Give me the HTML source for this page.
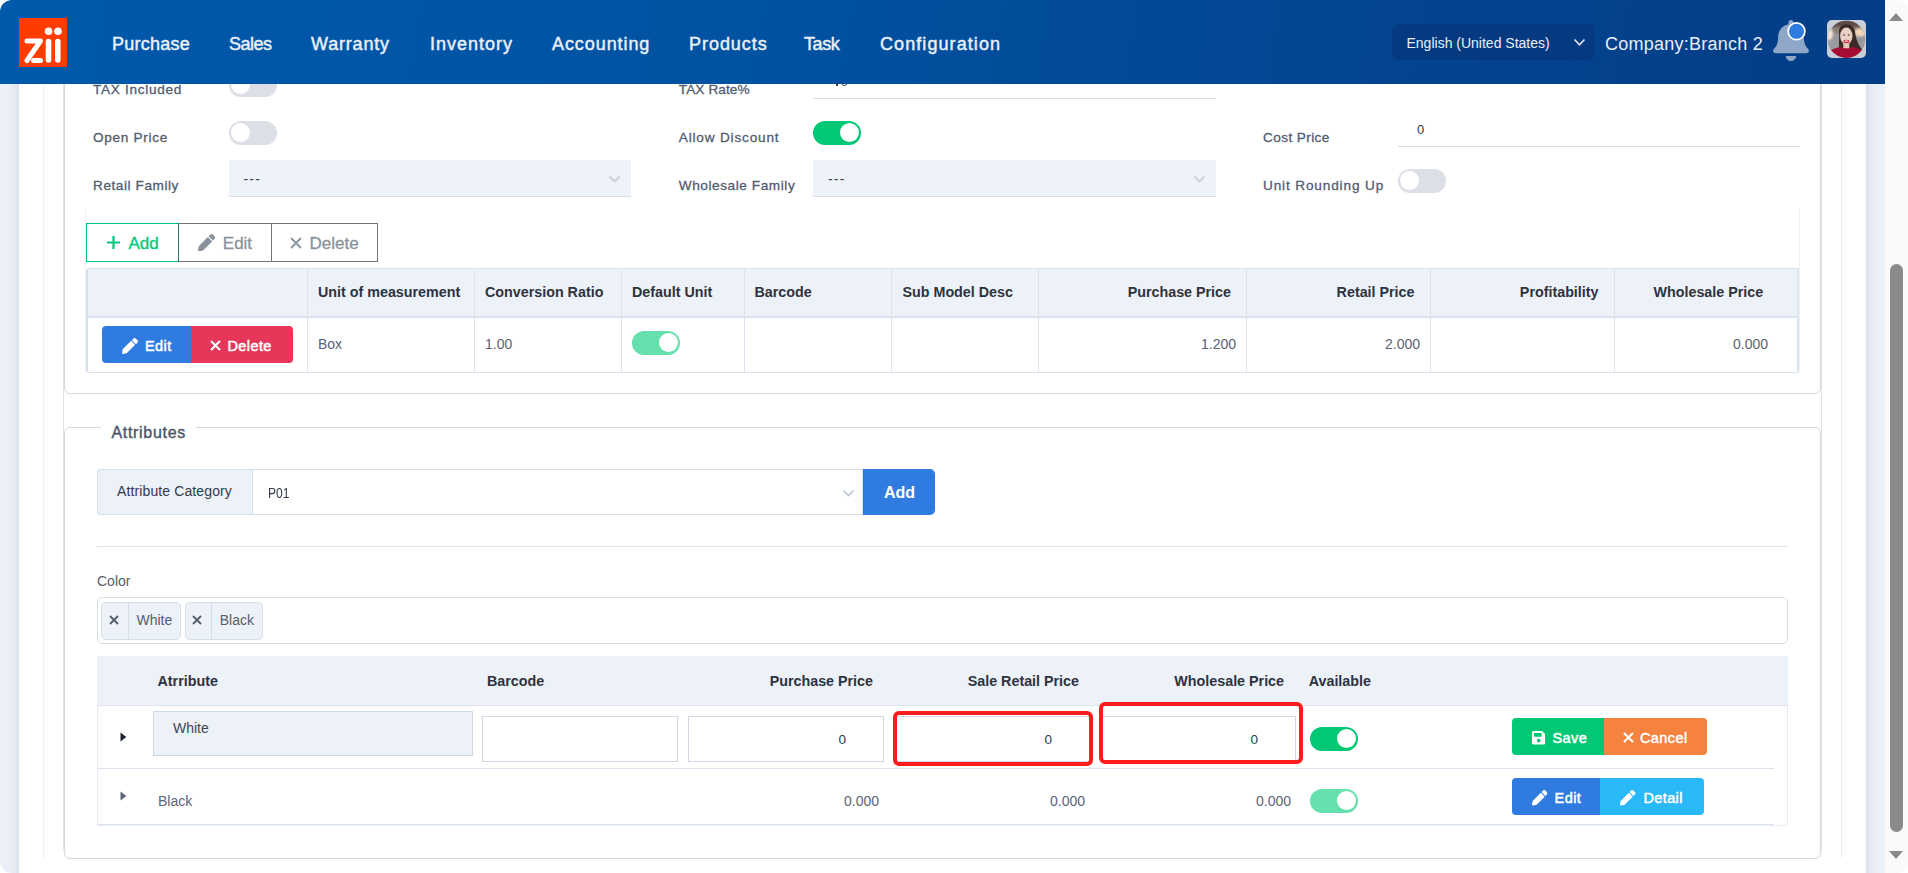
<!DOCTYPE html>
<html><head><meta charset="utf-8">
<style>
*{box-sizing:border-box;margin:0;padding:0}
html,body{width:1908px;height:873px;overflow:hidden;background:#fff;font-family:"Liberation Sans",sans-serif}
.a{position:absolute}
.t{position:absolute;line-height:1;white-space:nowrap}
#hdr{left:0;top:0;width:1885px;height:84px;background:linear-gradient(100deg,#0059ab 0%,#0052a2 40%,#03448f 75%,#033d86 100%);border-top-left-radius:12px}
.nav{color:#eaf0f8;font-size:18px;font-weight:normal;-webkit-text-stroke:0.45px #eaf0f8;letter-spacing:0.25px;top:34.8px}
.lbl{color:#505d72;font-size:13.6px;-webkit-text-stroke:0.3px #505d72;letter-spacing:0.7px}
.tog{position:absolute;width:48px;height:24px;border-radius:12px;background:#dcdfe6}
.tog::after{content:"";position:absolute;top:1.7px;left:1.6px;width:19.6px;height:19.6px;border-radius:50%;background:#fff}
.tog.on{background:#00c875}
.tog.on::after{left:27px;top:2px;width:19px;height:19px}
.tog.lt{background:#66e0ac}
.tog.lt::after{left:27px;top:2px;width:19px;height:19px}
.sel{position:absolute;background:#eef2f9;border-bottom:1px solid #d5dcea}
.chev{position:absolute;width:8px;height:8px;border-right:1.8px solid #c6cbd4;border-bottom:1.8px solid #c6cbd4;transform:rotate(45deg)}
.th{position:absolute;font-size:14.3px;font-weight:bold;color:#2d3340;line-height:1;white-space:nowrap}
.td{position:absolute;font-size:14px;color:#5a6270;line-height:1;white-space:nowrap}
.vl{position:absolute;width:1px;background:#dce3ee}
.hl{position:absolute;height:1px;background:#dce3ee}
.btn{position:absolute;color:#fff;font-size:14.5px;-webkit-text-stroke:0.5px #fff;letter-spacing:0.4px;line-height:1;white-space:nowrap}
</style></head><body>

<!-- page frame -->
<div class="a" style="left:0;top:84px;width:19px;height:789px;background:linear-gradient(90deg,#ecf1f9 0%,#e9eef7 50%,#e4e9f2 78%,#dce1eb 100%);border-bottom-left-radius:12px"></div>
<div class="a" style="left:43px;top:84px;width:1px;height:774px;background:#e9eef8"></div>
<div class="a" style="left:1841px;top:84px;width:1px;height:774px;background:#e9eef8"></div>
<div class="a" style="left:1866px;top:84px;width:19px;height:789px;background:linear-gradient(90deg,#dce1eb 0%,#e4e9f2 22%,#e9eef7 50%,#ecf1f9 100%)"></div>
<!-- scrollbar -->
<div class="a" style="left:1885px;top:0;width:23px;height:873px;background:#fafafa;border-top-right-radius:12px;border-bottom-right-radius:12px"></div>
<div class="a" style="left:1888.8px;top:12.8px;width:0;height:0;border-left:7.7px solid transparent;border-right:7.7px solid transparent;border-bottom:8.3px solid #8a8a8a"></div>
<div class="a" style="left:1888.8px;top:851px;width:0;height:0;border-left:7.7px solid transparent;border-right:7.7px solid transparent;border-top:8.2px solid #8a8a8a"></div>
<div class="a" style="left:1890px;top:264px;width:13px;height:568px;border-radius:6.5px;background:#8a8a8a"></div>

<!-- CARD 1 -->
<div class="a" style="left:63px;top:84px;width:1px;height:767px;background:#e0e3eb"></div>
<div class="a" style="left:1821px;top:84px;width:1px;height:767px;background:#e0e3eb"></div>
<div class="a" style="left:64px;top:30px;width:1757px;height:364px;border:1px solid #d6d8dd;border-radius:6px"></div>
<div class="t lbl" style="left:93px;top:82.6px">TAX Included</div>
<div class="t lbl" style="left:93px;top:130.6px">Open Price</div>
<div class="t lbl" style="left:93px;top:178.6px;letter-spacing:0.57px">Retail Family</div>
<div class="t lbl" style="left:678.8px;top:82.6px;letter-spacing:0.1px">TAX Rate%</div>
<div class="t lbl" style="left:678.8px;top:130.6px;letter-spacing:0.82px">Allow Discount</div>
<div class="t lbl" style="left:678.8px;top:178.6px;letter-spacing:0.58px">Wholesale Family</div>
<div class="t lbl" style="left:1263px;top:130.6px;letter-spacing:0.41px">Cost Price</div>
<div class="t lbl" style="left:1263px;top:178.6px;letter-spacing:0.86px">Unit Rounding Up</div>
<div class="tog" style="left:229px;top:72.5px"></div>
<div class="tog" style="left:229px;top:121px"></div>
<div class="tog on" style="left:813px;top:121px"></div>
<div class="tog" style="left:1398px;top:169px"></div>
<div class="sel" style="left:229px;top:160px;width:402px;height:37px"></div>
<div class="t" style="left:243.5px;top:172px;font-size:14px;letter-spacing:1.2px;color:#3d4454">---</div>
<svg class="a" style="left:607.8px;top:175.3px" width="13" height="9" viewBox="0 0 13 9"><path d="M1.5 1.5 L6.5 6.5 L11.5 1.5" stroke="#cdd1d9" stroke-width="2.1" fill="none"/></svg>
<div class="sel" style="left:813px;top:160px;width:403px;height:37px"></div>
<div class="t" style="left:828px;top:172px;font-size:14px;letter-spacing:1.2px;color:#3d4454">---</div>
<svg class="a" style="left:1192.6px;top:175.3px" width="13" height="9" viewBox="0 0 13 9"><path d="M1.5 1.5 L6.5 6.5 L11.5 1.5" stroke="#cdd1d9" stroke-width="2.1" fill="none"/></svg>
<div class="a" style="left:813px;top:97.5px;width:403px;height:1px;background:#d5dcea"></div>
<div class="a" style="left:836px;top:76px;width:1.7px;height:10px;background:#333a48"></div><div class="t" style="left:840.8px;top:75px;font-size:13px;color:#333a48">0</div>
<div class="a" style="left:1398px;top:145.5px;width:402px;height:1px;background:#d5dcea"></div>
<div class="t" style="left:1417px;top:122.7px;font-size:13px;color:#333a48">0</div>

<!-- units container -->
<div class="a" style="left:85px;top:208px;width:1px;height:165px;background:#eef2f8"></div>
<div class="a" style="left:1799px;top:208px;width:1px;height:165px;background:#eef2f8"></div>
<!-- toolbar -->
<div class="a" style="left:86px;top:223px;width:93px;height:39px;border:1px solid #00c878;z-index:1"></div>
<div class="a" style="left:178px;top:223px;width:94px;height:39px;border:1px solid #6f767e"></div>
<div class="a" style="left:271px;top:223px;width:107px;height:39px;border:1px solid #6f767e"></div>
<div class="a" style="left:178px;top:223px;width:1px;height:39px;background:#2e7a5c;z-index:2"></div>
<svg class="a" style="left:106px;top:235px" width="15" height="15" viewBox="0 0 15 15"><path d="M7.5 1 V14 M1 7.5 H14" stroke="#00c878" stroke-width="2.2"/></svg>
<div class="t" style="left:128.5px;top:234.9px;font-size:17px;-webkit-text-stroke:0.3px #00c878;color:#00c878">Add</div>
<svg class="a" style="left:198px;top:233.8px" width="17.3" height="17.3" viewBox="0 0 512 512"><path fill="#8a929c" d="M497.9 142.1l-46.1 46.1c-4.7 4.7-12.3 4.7-17 0l-111-111c-4.7-4.7-4.7-12.3 0-17l46.1-46.1c18.7-18.7 49.1-18.7 67.9 0l60.1 60.1c18.8 18.7 18.8 49.1 0 67.9zM284.2 99.8L21.6 362.4.4 483.9c-2.9 16.4 11.4 30.6 27.8 27.8l121.5-21.3 262.6-262.6c4.7-4.7 4.7-12.3 0-17l-111-111c-4.8-4.7-12.4-4.7-17.1 0z"/></svg>
<div class="t" style="left:222.8px;top:234.9px;font-size:17px;-webkit-text-stroke:0.3px #8a929c;color:#8a929c">Edit</div>
<svg class="a" style="left:290px;top:237px" width="12" height="12" viewBox="0 0 12 12"><path d="M1 1 L11 11 M11 1 L1 11" stroke="#8a929c" stroke-width="1.8"/></svg>
<div class="t" style="left:309.5px;top:234.9px;font-size:17px;-webkit-text-stroke:0.3px #8a929c;color:#8a929c">Delete</div>

<!-- units table -->
<div class="a" style="left:86px;top:268px;width:1713px;height:105px;border:1px solid #d9e1ed;border-left:2px solid #d6e0ec;border-right:2px solid #dde5ef;border-radius:4px 0 3px 4px;overflow:hidden">
 <div class="a" style="left:0;top:0;width:1711px;height:49px;background:#edf1f8;border-bottom:2px solid #dae2ee"></div>
</div>
<div class="vl" style="left:307px;top:269px;height:103px"></div>
<div class="vl" style="left:474px;top:269px;height:103px"></div>
<div class="vl" style="left:621px;top:269px;height:103px"></div>
<div class="vl" style="left:744px;top:269px;height:103px"></div>
<div class="vl" style="left:891px;top:269px;height:103px"></div>
<div class="vl" style="left:1038px;top:269px;height:103px"></div>
<div class="vl" style="left:1246px;top:269px;height:103px"></div>
<div class="vl" style="left:1430px;top:269px;height:103px"></div>
<div class="vl" style="left:1614px;top:269px;height:103px"></div>
<div class="th" style="left:318px;top:285px">Unit of measurement</div>
<div class="th" style="left:485px;top:285px">Conversion Ratio</div>
<div class="th" style="left:632px;top:285px">Default Unit</div>
<div class="th" style="left:754.5px;top:285px">Barcode</div>
<div class="th" style="left:902.5px;top:285px">Sub Model Desc</div>
<div class="th" style="right:677px;top:285px">Purchase Price</div>
<div class="th" style="right:493.5px;top:285px">Retail Price</div>
<div class="th" style="right:309.5px;top:285px">Profitability</div>
<div class="th" style="left:1653.5px;top:285px">Wholesale Price</div>
<div class="a" style="left:102px;top:326px;width:191px;height:37px;border-radius:4px;overflow:hidden">
 <div class="a" style="left:0;top:0;width:89px;height:37px;background:#2f7be0"></div>
 <div class="a" style="left:89px;top:0;width:102px;height:37px;background:#e6375a"></div>
</div>
<svg class="a" style="left:121.8px;top:337.5px" width="16" height="16" viewBox="0 0 512 512"><path fill="#fff" d="M497.9 142.1l-46.1 46.1c-4.7 4.7-12.3 4.7-17 0l-111-111c-4.7-4.7-4.7-12.3 0-17l46.1-46.1c18.7-18.7 49.1-18.7 67.9 0l60.1 60.1c18.8 18.7 18.8 49.1 0 67.9zM284.2 99.8L21.6 362.4.4 483.9c-2.9 16.4 11.4 30.6 27.8 27.8l121.5-21.3 262.6-262.6c4.7-4.7 4.7-12.3 0-17l-111-111c-4.8-4.7-12.4-4.7-17.1 0z"/></svg>
<div class="btn" style="left:145px;top:338.7px">Edit</div>
<svg class="a" style="left:210px;top:340px" width="11" height="11" viewBox="0 0 11 11"><path d="M1 1 L10 10 M10 1 L1 10" stroke="#fff" stroke-width="2.1"/></svg>
<div class="btn" style="left:227.5px;top:338.7px">Delete</div>
<div class="td" style="left:318px;top:336.5px">Box</div>
<div class="td" style="left:485px;top:336.5px">1.00</div>
<div class="tog lt" style="left:632px;top:331px"></div>
<div class="td" style="right:672px;top:336.5px">1.200</div>
<div class="td" style="right:488px;top:336.5px">2.000</div>
<div class="td" style="right:140px;top:336.5px">0.000</div>

<!-- CARD 2 -->
<div class="a" style="left:64px;top:427px;width:1757px;height:432px;border:1px solid #d6d8dd;border-radius:6px"></div>
<div class="a" style="left:101px;top:420px;width:95px;height:12px;background:#fff"></div>
<div class="t" style="left:111.4px;top:424.9px;font-size:16px;-webkit-text-stroke:0.4px #4a5568;letter-spacing:0.7px;color:#4a5568">Attributes</div>

<div class="a" style="left:97px;top:469px;width:766px;height:46px;border:1px solid #d6deea;border-radius:4px 0 0 4px;background:#fff"></div>
<div class="a" style="left:97px;top:469px;width:156px;height:46px;border:1px solid #d6deea;border-radius:4px 0 0 4px;background:#edf1f8"></div>
<div class="t" style="left:117px;top:484.4px;font-size:14px;letter-spacing:0.12px;color:#333a48">Attribute Category</div>
<div class="t" style="left:268px;top:485.8px;font-size:14px;color:#333a48;transform:scaleX(0.86);transform-origin:0 0">P01</div>
<svg class="a" style="left:842px;top:488.5px" width="13" height="9" viewBox="0 0 13 9"><path d="M1.5 1.5 L6.5 6.5 L11.5 1.5" stroke="#b8c4d4" stroke-width="1.6" fill="none"/></svg>
<div class="a" style="left:863px;top:469px;width:72px;height:46px;border-radius:0 5px 5px 0;background:#2f7be0"></div>
<div class="t" style="left:884px;top:484.9px;font-size:16px;font-weight:bold;color:#fff">Add</div>

<div class="a" style="left:97px;top:546px;width:1691px;height:1px;background:#dde2ea"></div>
<div class="t" style="left:97px;top:574px;font-size:14px;color:#555d6a">Color</div>

<div class="a" style="left:97px;top:597px;width:1691px;height:47px;border:1px solid #d6deea;border-radius:5px"></div>
<div class="a" style="left:101px;top:602px;width:80px;height:38px;border:1px solid #d6deea;border-radius:5px;background:#edf1f8"></div>
<div class="a" style="left:128px;top:603px;width:1px;height:36px;background:#d6deea"></div>
<svg class="a" style="left:108.5px;top:614.5px" width="10" height="10" viewBox="0 0 10 10"><path d="M1 1 L9 9 M9 1 L1 9" stroke="#555d6a" stroke-width="1.8"/></svg>
<div class="t" style="left:136.5px;top:612.7px;font-size:14px;color:#555d6a">White</div>
<div class="a" style="left:185px;top:602px;width:78px;height:38px;border:1px solid #d6deea;border-radius:5px;background:#edf1f8"></div>
<div class="a" style="left:211px;top:603px;width:1px;height:36px;background:#d6deea"></div>
<svg class="a" style="left:192px;top:614.5px" width="10" height="10" viewBox="0 0 10 10"><path d="M1 1 L9 9 M9 1 L1 9" stroke="#555d6a" stroke-width="1.8"/></svg>
<div class="t" style="left:219.7px;top:612.7px;font-size:14px;color:#555d6a">Black</div>

<!-- attr table -->
<div class="a" style="left:97px;top:656px;width:1691px;height:170px;border:1px solid #e8edf5;border-top:none"></div>
<div class="a" style="left:97px;top:656px;width:1691px;height:50px;background:#edf1f8;border-bottom:1px solid #dce3ee"></div>
<div class="hl" style="left:97px;top:768px;width:1677px"></div>
<div class="hl" style="left:97px;top:824px;width:1677px"></div>
<div class="th" style="left:157.5px;top:674.2px">Atrribute</div>
<div class="th" style="left:487px;top:674.2px">Barcode</div>
<div class="th" style="right:1035px;top:674.2px">Purchase Price</div>
<div class="th" style="right:829px;top:674.2px">Sale Retail Price</div>
<div class="th" style="right:624px;top:674.2px">Wholesale Price</div>
<div class="th" style="left:1308.7px;top:674.2px">Available</div>

<svg class="a" style="left:119.5px;top:731.5px" width="7" height="10" viewBox="0 0 7 10"><path d="M0.5 0.5 L6.3 5 L0.5 9.5 Z" fill="#1f2530"/></svg>
<div class="a" style="left:153px;top:711px;width:320px;height:45px;border:1px solid #d0d8e6;background:#edf1f8"></div>
<div class="t" style="left:173px;top:721.2px;font-size:14px;color:#3d4554">White</div>
<div class="a" style="left:482px;top:716px;width:196px;height:46px;border:1px solid #d0d8e6;background:#fff"></div>
<div class="a" style="left:688px;top:716px;width:196px;height:46px;border:1px solid #d0d8e6;background:#fff"></div>
<div class="t" style="left:838.5px;top:733.2px;font-size:13.5px;color:#333a48">0</div>
<div class="a" style="left:894px;top:716px;width:196px;height:46px;border:1px solid #d0d8e6;background:#fff"></div>
<div class="t" style="left:1044.4px;top:733.2px;font-size:13.5px;color:#333a48">0</div>
<div class="a" style="left:1100px;top:716px;width:196px;height:46px;border:1px solid #d0d8e6;background:#fff"></div>
<div class="t" style="left:1250.6px;top:733.2px;font-size:13.5px;color:#333a48">0</div>
<div class="a" style="left:892.7px;top:710.5px;width:200.8px;height:55.8px;border:4px solid #ff1c1c;border-radius:6px"></div>
<div class="a" style="left:1099.3px;top:702px;width:204px;height:61.5px;border:4.2px solid #ff1c1c;border-radius:6px"></div>
<div class="tog on" style="left:1310px;top:727px"></div>
<div class="a" style="left:1512px;top:718px;width:195px;height:37px;border-radius:4px;overflow:hidden">
 <div class="a" style="left:0;top:0;width:92px;height:37px;background:#00c875"></div>
 <div class="a" style="left:92px;top:0;width:103px;height:37px;background:#f5823f"></div>
</div>
<svg class="a" style="left:1531.8px;top:730.2px" width="13.5" height="15.4" viewBox="0 0 448 512"><path fill="#fff" d="M433.941 129.941l-83.882-83.882A48 48 0 0 0 316.118 32H48C21.490 32 0 53.49 0 80v352c0 26.51 21.49 48 48 48h352c26.51 0 48-21.49 48-48V163.882a48 48 0 0 0-14.059-33.941zM224 416c-35.346 0-64-28.654-64-64 0-35.346 28.654-64 64-64s64 28.654 64 64c0 35.346-28.654 64-64 64zm96-304.52V212c0 6.627-5.373 12-12 12H76c-6.627 0-12-5.373-12-12V108c0-6.627 5.373-12 12-12h228.52c3.183 0 6.235 1.264 8.485 3.515l3.48 3.48A11.996 11.996 0 0 1 320 111.48z"/></svg>
<div class="btn" style="left:1552.5px;top:730.8px">Save</div>
<svg class="a" style="left:1622.5px;top:731.5px" width="11" height="11" viewBox="0 0 11 11"><path d="M1 1 L10 10 M10 1 L1 10" stroke="#fff" stroke-width="2.2"/></svg>
<div class="btn" style="left:1640px;top:730.8px">Cancel</div>

<svg class="a" style="left:119.5px;top:790.5px" width="7" height="10" viewBox="0 0 7 10"><path d="M0.5 0.5 L6.3 5 L0.5 9.5 Z" fill="#5a6578"/></svg>
<div class="td" style="left:158px;top:794.1px;color:#5a6578">Black</div>
<div class="td" style="right:1029px;top:794.1px;color:#5a6578">0.000</div>
<div class="td" style="right:823px;top:794.1px;color:#5a6578">0.000</div>
<div class="td" style="right:617px;top:794.1px;color:#5a6578">0.000</div>
<div class="tog lt" style="left:1310px;top:789px"></div>
<div class="a" style="left:1512px;top:778px;width:192px;height:37px;border-radius:4px;overflow:hidden">
 <div class="a" style="left:0;top:0;width:88px;height:37px;background:#2f7be0"></div>
 <div class="a" style="left:88px;top:0;width:104px;height:37px;background:#29b9f9"></div>
</div>
<svg class="a" style="left:1531.5px;top:790px" width="15.5" height="15.5" viewBox="0 0 512 512"><path fill="#fff" d="M497.9 142.1l-46.1 46.1c-4.7 4.7-12.3 4.7-17 0l-111-111c-4.7-4.7-4.7-12.3 0-17l46.1-46.1c18.7-18.7 49.1-18.7 67.9 0l60.1 60.1c18.8 18.7 18.8 49.1 0 67.9zM284.2 99.8L21.6 362.4.4 483.9c-2.9 16.4 11.4 30.6 27.8 27.8l121.5-21.3 262.6-262.6c4.7-4.7 4.7-12.3 0-17l-111-111c-4.8-4.7-12.4-4.7-17.1 0z"/></svg>
<div class="btn" style="left:1554.6px;top:790.8px">Edit</div>
<svg class="a" style="left:1620px;top:790px" width="15.5" height="15.5" viewBox="0 0 512 512"><path fill="#fff" d="M497.9 142.1l-46.1 46.1c-4.7 4.7-12.3 4.7-17 0l-111-111c-4.7-4.7-4.7-12.3 0-17l46.1-46.1c18.7-18.7 49.1-18.7 67.9 0l60.1 60.1c18.8 18.7 18.8 49.1 0 67.9zM284.2 99.8L21.6 362.4.4 483.9c-2.9 16.4 11.4 30.6 27.8 27.8l121.5-21.3 262.6-262.6c4.7-4.7 4.7-12.3 0-17l-111-111c-4.8-4.7-12.4-4.7-17.1 0z"/></svg>
<div class="btn" style="left:1643.4px;top:790.8px">Detail</div>

<!-- HEADER -->
<div id="hdr" class="a"></div>
<svg class="a" style="left:19px;top:17.5px" width="48" height="49" viewBox="0 0 48 49">
<rect width="48" height="49" fill="#ff3c00"/>
<g stroke="#fff" stroke-linecap="round" fill="none">
<path d="M8 23 H21.5 L8 42.5" stroke-width="5" stroke-linejoin="round"/>
<path d="M14.5 42.5 H21.5" stroke-width="5"/>
<path d="M29.5 23.5 V42" stroke-width="5.6"/>
<path d="M38.8 23.5 V42" stroke-width="5.6"/>
</g>
<circle cx="29.6" cy="13.3" r="3.8" fill="#fff"/>
<circle cx="39" cy="13.3" r="3.8" fill="#fff"/>
</svg>
<div class="t nav" style="left:112px">Purchase</div>
<div class="t nav" style="left:229px;letter-spacing:-0.5px">Sales</div>
<div class="t nav" style="left:311px;letter-spacing:0.82px">Warranty</div>
<div class="t nav" style="left:430px;letter-spacing:1.0px">Inventory</div>
<div class="t nav" style="left:552px;letter-spacing:0.92px">Accounting</div>
<div class="t nav" style="left:689px;letter-spacing:0.96px">Products</div>
<div class="t nav" style="left:804px;letter-spacing:-0.42px">Task</div>
<div class="t nav" style="left:880px;letter-spacing:1.08px">Configuration</div>

<div class="a" style="left:1392px;top:24px;width:203px;height:35.5px;border-radius:7px;background:#063a80"></div>
<div class="t" style="left:1406.5px;top:35.6px;font-size:14px;color:#e8eef7">English (United States)</div>
<svg class="a" style="left:1573px;top:38px" width="13" height="9" viewBox="0 0 13 9"><path d="M1.5 1.5 L6.5 6.8 L11.5 1.5" stroke="#d8dfea" stroke-width="1.8" fill="none"/></svg>
<div class="t" style="left:1605px;top:34.6px;font-size:18px;letter-spacing:0.25px;color:#e8eef8">Company:Branch 2</div>
<svg class="a" style="left:1773px;top:20px" width="36" height="41" viewBox="0 0 448 512">
<path fill="#8ea6c8" d="M224 512c35.32 0 63.97-28.65 63.97-64H160.03c0 35.35 28.65 64 63.97 64zm215.39-149.71c-19.32-20.76-55.47-51.990-55.47-154.29 0-77.7-54.48-139.9-127.94-155.16V32c0-17.67-14.32-32-31.98-32s-31.980 14.33-31.98 32v20.84C118.560 68.1 64.08 130.3 64.08 208c0 102.3-36.15 133.53-55.47 154.29-6 6.45-8.66 14.16-8.61 21.71 .11 16.4 12.98 32 32.1 32h383.8c19.12 0 32-15.6 32.1-32 .05-7.55-2.61-15.27-8.61-21.71z"/>
</svg>
<svg class="a" style="left:1786px;top:21px" width="22" height="22" viewBox="0 0 22 22"><circle cx="10.5" cy="10.3" r="8.4" fill="#2f7be2" stroke="#fff" stroke-width="1.7"/></svg>
<svg class="a" style="left:1827px;top:20px" width="39" height="38" viewBox="0 0 39 38">
<defs><clipPath id="avc"><circle cx="19.5" cy="19.3" r="18.6"/></clipPath>
<filter id="bl" x="-20%" y="-20%" width="140%" height="140%"><feGaussianBlur stdDeviation="1.2"/></filter>
<filter id="bl2"><feGaussianBlur stdDeviation="0.5"/></filter></defs>
<rect width="39" height="38" rx="5" fill="#c9ced8"/>
<g clip-path="url(#avc)">
<rect width="39" height="38" fill="#96979b"/>
<g filter="url(#bl)">
<rect x="-2" y="-2" width="43" height="9" fill="#5c4c47"/>
<rect x="-2" y="7" width="43" height="6" fill="#8c7f78"/>
<ellipse cx="2" cy="14" rx="4" ry="6" fill="#efe6d6"/>
<ellipse cx="33" cy="12.5" rx="6" ry="4" fill="#f3d6ba"/>
<rect x="-2" y="21" width="43" height="12" fill="#9c9da2"/>
</g>
<g filter="url(#bl2)">
<path d="M12 12 C12 6 16 4.5 19.5 4.5 C24 4.5 27.5 7 28 12 C28.5 18 31 24 35 30 L30 34 C26 30 24 28 19 28 C15 28 13.5 28.5 12 29 C11.5 24 12.5 18 12 12 Z" fill="#3b2a25"/>
<ellipse cx="19.3" cy="16" rx="6.2" ry="8.4" fill="#e9d0c6"/>
<rect x="16.3" y="21" width="6" height="8" fill="#e3c4b8"/>
<ellipse cx="17" cy="15" rx="1.1" ry="0.7" fill="#6a4a40"/>
<ellipse cx="21.8" cy="15" rx="1.1" ry="0.7" fill="#6a4a40"/>
<ellipse cx="19.4" cy="21.4" rx="3" ry="1.7" fill="#cc2233"/>
<ellipse cx="19.4" cy="21.1" rx="2" ry="0.7" fill="#fff"/>
<path d="M-1 40 V33 C3 30 8 28 13 27 C15 28 17 28.3 19.5 28.3 C22 28.3 24 28 26 27 C31 28.5 36 30 40 33 V40 Z" fill="#a50d35"/>
</g>
</g>
</svg>
</body></html>
